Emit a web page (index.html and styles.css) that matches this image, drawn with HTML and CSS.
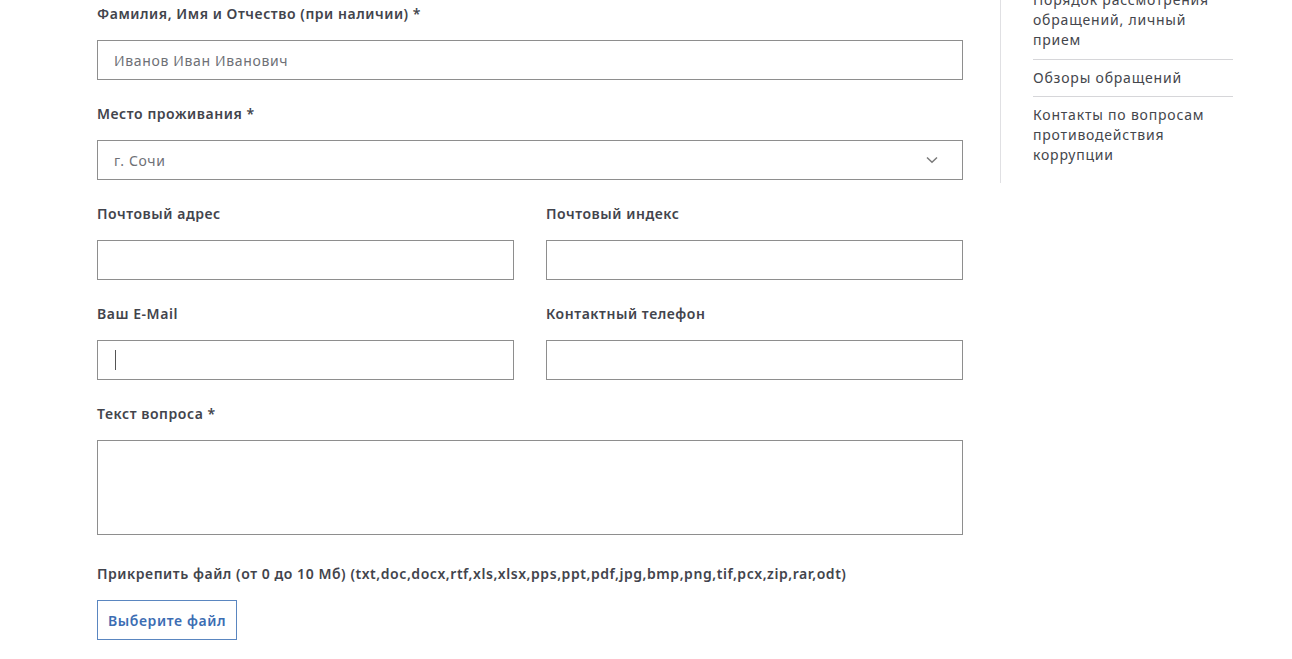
FILE: index.html
```html
<!DOCTYPE html>
<html lang="ru">
<head>
<meta charset="utf-8">
<title>Форма обращения</title>
<link rel="stylesheet" href="styles.css">
</head>
<body>
<div class="page">
  <form class="form">
    <div class="group">
      <label class="label">Фамилия, Имя и Отчество (при наличии) *</label>
      <div class="input"><span class="placeholder">Иванов Иван Иванович</span></div>
    </div>
    <div class="group">
      <label class="label">Место проживания *</label>
      <div class="input select">
        <span class="value">г. Сочи</span>
        <svg class="chevron" width="12" height="8" viewBox="0 0 12 8"><path d="M1 1.5 L6 6.2 L11 1.5" fill="none" stroke="#7a7a7a" stroke-width="1.5"/></svg>
      </div>
    </div>
    <div class="row">
      <div class="group">
        <label class="label">Почтовый адрес</label>
        <div class="input"></div>
      </div>
      <div class="group">
        <label class="label">Почтовый индекс</label>
        <div class="input"></div>
      </div>
    </div>
    <div class="row">
      <div class="group">
        <label class="label">Ваш E-Mail</label>
        <div class="input focused"><span class="caret"></span></div>
      </div>
      <div class="group">
        <label class="label">Контактный телефон</label>
        <div class="input"></div>
      </div>
    </div>
    <div class="group textgroup">
      <label class="label">Текст вопроса *</label>
      <div class="input textarea"></div>
    </div>
    <div class="group">
      <label class="label">Прикрепить файл (от 0 до 10 Мб) (txt,doc,docx,rtf,xls,xlsx,pps,ppt,pdf,jpg,bmp,png,tif,pcx,zip,rar,odt)</label>
      <div><span class="filebtn">Выберите файл</span></div>
    </div>
  </form>
  <aside class="side">
    <ul class="menu">
      <li>Порядок рассмотрения обращений, личный прием</li>
      <li>Обзоры обращений</li>
      <li>Контакты по вопросам противодействия коррупции</li>
    </ul>
  </aside>
</div>
</body>
</html>
```
FILE: styles.css
```css
html, body {
  margin: 0;
  padding: 0;
  background: #ffffff;
  overflow: hidden;
}
body {
  font-family: "Noto Sans", "Open Sans", sans-serif;
  font-size: 14px;
  letter-spacing: 0.65px;
  color: #3c3e44;
}
.page {
  display: flex;
  padding-left: 97px;
  padding-top: 3px;
}
.form {
  width: 866px;
  display: flex;
  flex-direction: column;
}
.group {
  display: flex;
  flex-direction: column;
  margin-bottom: 23px;
}
.row {
  display: grid;
  grid-template-columns: 1fr 1fr;
  column-gap: 32px;
}
.label {
  display: block;
  line-height: 20px;
  padding-top: 1px;
  font-weight: 600;
  font-size: 14px;
  letter-spacing: 0.55px;
  color: #42444c;
  margin-bottom: 16px;
}
.input {
  position: relative;
  box-sizing: border-box;
  height: 40px;
  border: 1px solid #8e8e8e;
  display: flex;
  align-items: center;
  padding: 0 16px;
  color: #6e7076;
  font-size: 14px;
}
.placeholder, .value {
  color: #6e7076;
}
.select {
  justify-content: space-between;
  padding-right: 24px;
}
.chevron {
  display: block;
}
.caret {
  position: absolute;
  left: 17px;
  top: 9px;
  width: 1px;
  height: 20px;
  background: #555;
}
.textarea {
  height: 95px;
}
.textgroup {
  margin-bottom: 28px;
}
.filebtn {
  display: inline-flex;
  align-items: center;
  box-sizing: border-box;
  height: 40px;
  width: 140px;
  justify-content: center;
  border: 1px solid #5a86c0;
  color: #3b6db3;
  font-weight: 600;
  font-size: 14px;
  letter-spacing: 0.6px;
}
.side {
  margin-left: 37px;
  margin-top: -13px;
  width: 233px;
  border-left: 1px solid #e0e0e3;
  height: 193px;
  box-sizing: border-box;
  padding-left: 32px;
}
.menu {
  list-style: none;
  margin: 0;
  padding: 0;
  width: 200px;
}
.menu li {
  line-height: 20px;
  font-size: 14px;
  letter-spacing: 0.8px;
  color: #44464c;
  padding: 8px 0;
  border-top: 1px solid #d6d6d9;
}
.menu li:first-child {
  border-top: none;
  padding-top: 0;
  padding-bottom: 9px;
}
```
